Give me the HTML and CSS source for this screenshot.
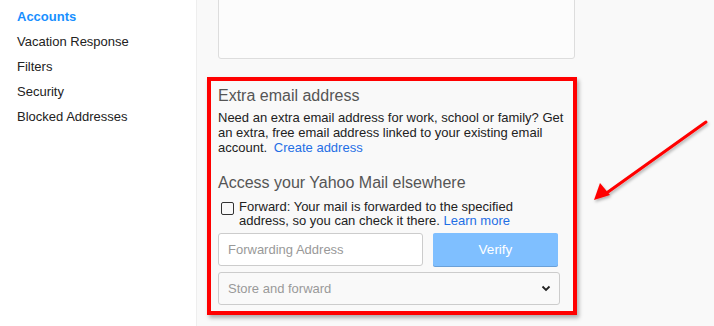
FILE: index.html
```html
<!DOCTYPE html>
<html lang="en">
<head>
    <meta charset="UTF-8">
    <title>Mail Settings</title>
    <link rel="stylesheet" href="styles.css">
</head>
<body>
    <div class="layout">
        <!-- 左侧菜单 -->
        <nav class="sidebar">
            <a class="nav-item active">Accounts</a>
            <a class="nav-item">Vacation Response</a>
            <a class="nav-item">Filters</a>
            <a class="nav-item">Security</a>
            <a class="nav-item">Blocked Addresses</a>
        </nav>

        <main class="content">
            <div class="top-box"></div>

            <!-- 高亮区域 -->
            <section class="highlight">
                <h2 class="title">Extra email address</h2>
                <p class="text">Need an extra email address for work, school or family? Get an extra, free email address linked to your existing email account. <a class="link create">Create address</a></p>

                <h2 class="title second">Access your Yahoo Mail elsewhere</h2>
                <label class="forward">
                    <span class="checkbox"></span>
                    <span>Forward: Your mail is forwarded to the specified address, so you can check it there. <a class="link">Learn more</a></span>
                </label>

                <div class="row">
                    <div class="input">Forwarding Address</div>
                    <button class="verify">Verify</button>
                </div>
                <div class="select">
                    <span>Store and forward</span>
                    <svg width="10" height="7" viewBox="0 0 10 7"><path d="M1.5 1.5 L5 5 L8.5 1.5" fill="none" stroke="#222" stroke-width="1.8"/></svg>
                </div>
            </section>
        </main>
    </div>

    <!-- 箭头 -->
    <svg class="arrow" width="714" height="326" viewBox="0 0 714 326">
        <defs>
            <filter id="shadow" x="-10%" y="-10%" width="130%" height="130%">
                <feDropShadow dx="1" dy="2" stdDeviation="1.5" flood-color="#000" flood-opacity="0.3"/>
            </filter>
        </defs>
        <g filter="url(#shadow)">
            <line x1="706" y1="122" x2="608" y2="192" stroke="#ff0000" stroke-width="3" stroke-linecap="round"/>
            <polygon points="594,200 600,183 610,195" fill="#ff0000"/>
        </g>
    </svg>
</body>
</html>
```

FILE: styles.css
```css
body {
    margin: 0;
    background: #f9f9f9;
    font-family: "Liberation Sans", Arial, sans-serif;
    color: #222;
    overflow: hidden;
    height: 326px;
    position: relative;
}

.layout {
    display: flex;
    height: 100%;
}

.sidebar {
    width: 196px;
    background: #fff;
    border-right: 1px solid #eee;
    display: flex;
    flex-direction: column;
    padding-top: 8px;
}

.nav-item {
    font-size: 13px;
    line-height: 17px;
    padding: 0 0 8px 17px;
    color: #222;
}

.nav-item.active {
    color: #188fff;
    font-weight: bold;
}

.content {
    flex: 1;
    padding-left: 10px;
}

.top-box {
    width: 357px;
    height: 62px;
    margin-left: 11px;
    margin-top: -3px;
    background: #fcfcfc;
    border: 1px solid #ddd;
    border-radius: 3px;
    box-sizing: border-box;
}

/* 红框 */
.highlight {
    width: 370px;
    box-sizing: border-box;
    margin-top: 18px;
    border: 4px solid #ff0000;
    padding: 5px 0 6px 7px;
    box-shadow: 2px 3px 4px rgba(0, 0, 0, 0.3);
}

.title {
    font-size: 16px;
    font-weight: normal;
    color: #555;
    margin: 0;
    line-height: 20px;
}

.title.second {
    margin-top: 18px;
}

.text {
    font-size: 13px;
    line-height: 15px;
    margin: 4px 0 0;
    padding-right: 4px;
}

.link {
    color: #1f6fe5;
}

.create {
    margin-left: 3px;
}

.forward {
    display: flex;
    align-items: flex-start;
    gap: 5px;
    font-size: 13px;
    line-height: 14px;
    margin-top: 7px;
    padding-left: 3px;
    padding-right: 40px;
}

.checkbox {
    flex: none;
    width: 11px;
    height: 11px;
    border: 1px solid #333;
    border-radius: 2px;
    margin-top: 2px;
}

.row {
    display: flex;
    gap: 10px;
    margin-top: 5px;
}

.input {
    width: 205px;
    height: 33px;
    box-sizing: border-box;
    border: 1px solid #ccc;
    border-radius: 3px;
    background: #fff;
    color: #999;
    font-size: 13px;
    padding: 0 9px;
    display: flex;
    align-items: center;
}

.verify {
    width: 125px;
    height: 33px;
    border: none;
    border-radius: 2px;
    background: #7fbfff;
    color: #fff;
    font-family: inherit;
    font-size: 13.5px;
    box-shadow: 0 1px 0 #6aa0d8;
}

.select {
    width: 342px;
    height: 33px;
    box-sizing: border-box;
    margin-top: 6px;
    border: 1px solid #ccc;
    border-radius: 3px;
    background: #f9f9f9;
    color: #999;
    font-size: 13px;
    padding: 0 8px 0 9px;
    display: flex;
    align-items: center;
    justify-content: space-between;
}

.arrow {
    position: absolute;
    left: 0;
    top: 0;
    pointer-events: none;
}
```
